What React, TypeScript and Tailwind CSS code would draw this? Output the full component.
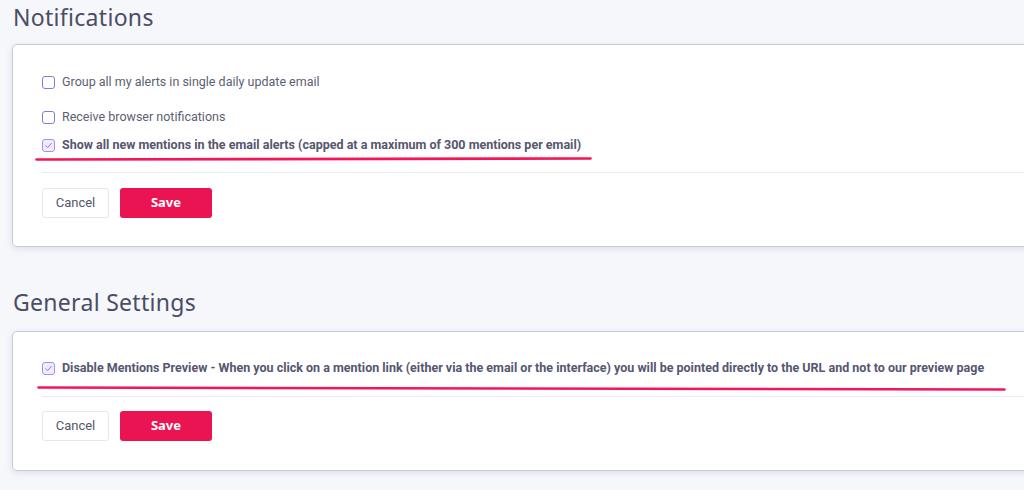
import React from "react";

const HEADING = "font-['Noto_Sans',sans-serif]";

function Box({ checked }: { checked?: boolean }) {
  return checked ? (
    <span className="flex h-[13px] w-[13px] shrink-0 items-center justify-center rounded-[3px] border-[1.5px] border-[#a490f2] bg-[#f1ecff]">
      <svg viewBox="0 0 10 10" className="h-[9px] w-[9px]" fill="none">
        <path d="M2 5.2 L4.1 7.3 L8.2 2.6" stroke="#8a74e6" strokeWidth={1.1} strokeLinecap="round" strokeLinejoin="round" />
      </svg>
    </span>
  ) : (
    <span className="h-[13px] w-[13px] shrink-0 rounded-[3px] border-[1.5px] border-[#8a7ad8] bg-white" />
  );
}

function Option({ label, checked }: { label: string; checked?: boolean }) {
  return (
    <label className="flex items-center gap-[7px] leading-none">
      <Box checked={checked} />
      <span className={checked ? "text-[12.5px] font-bold text-[#555670]" : "text-[12.5px] text-[#5d5e74]"}>{label}</span>
    </label>
  );
}

/** Hand-drawn highlighter stroke under the checked option. */
function Scribble({ width, drop }: { width: number; drop: number }) {
  return (
    <svg width={width} height={6} className="block" fill="none">
      <path d={`M1.5 2.5 Q ${width / 2} ${2 + drop / 2} ${width - 1.5} ${2.5 + drop}`} stroke="#f5165a" strokeWidth={2.6} strokeLinecap="round" />
    </svg>
  );
}

function Actions() {
  return (
    <div className="flex gap-[11px] px-[29px]">
      <button className="h-[30px] w-[67px] rounded-[3px] border border-[#e6e6f0] bg-white text-[13px] text-[#55566c]">Cancel</button>
      <button className={`h-[30px] w-[92px] rounded-[3px] bg-[#ea1452] text-[13px] font-bold text-white ${HEADING}`}>Save</button>
    </div>
  );
}

export default function App() {
  return (
    <div className="h-[490px] w-[1024px] overflow-hidden bg-[#f5f7fb] font-['Roboto',sans-serif]">
      <h2 className={`pl-[13px] pt-[3px] text-[23px] leading-[28px] tracking-[0.3px] text-[#4b4c66] ${HEADING}`}>Notifications</h2>

      <section className="ml-[12px] mt-[13px] h-[203px] w-[1030px] rounded-[5px] border border-[#c9c9d3] bg-white shadow-[0_2px_6px_rgba(120,120,160,0.18)]">
        <div className="flex flex-col px-[29px] pt-[31px]">
          <Option label="Group all my alerts in single daily update email" />
          <div className="mt-[22px]">
            <Option label="Receive browser notifications" />
          </div>
          <div className="mt-[15px]">
            <Option checked label="Show all new mentions in the email alerts (capped at a maximum of 300 mentions per email)" />
          </div>
        </div>
        <div className="ml-[22px] mt-[5px]">
          <Scribble width={557} drop={-1} />
        </div>
        <div className="ml-[29px] mt-[9px] border-t border-[#ececf6]" />
        <div className="mt-[15px]">
          <Actions />
        </div>
      </section>

      <h2 className={`mt-[41px] pl-[13px] text-[23px] leading-[28px] tracking-[0.3px] text-[#4b4c66] ${HEADING}`}>General Settings</h2>

      <section className="ml-[12px] mt-[15px] h-[140px] w-[1030px] rounded-[5px] border border-[#c9c9d3] bg-white shadow-[0_2px_6px_rgba(120,120,160,0.18)]">
        <div className="px-[29px] pt-[30px]">
          <Option checked label="Disable Mentions Preview - When you click on a mention link (either via the email or the interface) you will be pointed directly to the URL and not to our preview page" />
        </div>
        <div className="ml-[24px] mt-[10px]">
          <Scribble width={969} drop={2} />
        </div>
        <div className="ml-[29px] mt-[5px] border-t border-[#ececf6]" />
        <div className="mt-[14px]">
          <Actions />
        </div>
      </section>
    </div>
  );
}
